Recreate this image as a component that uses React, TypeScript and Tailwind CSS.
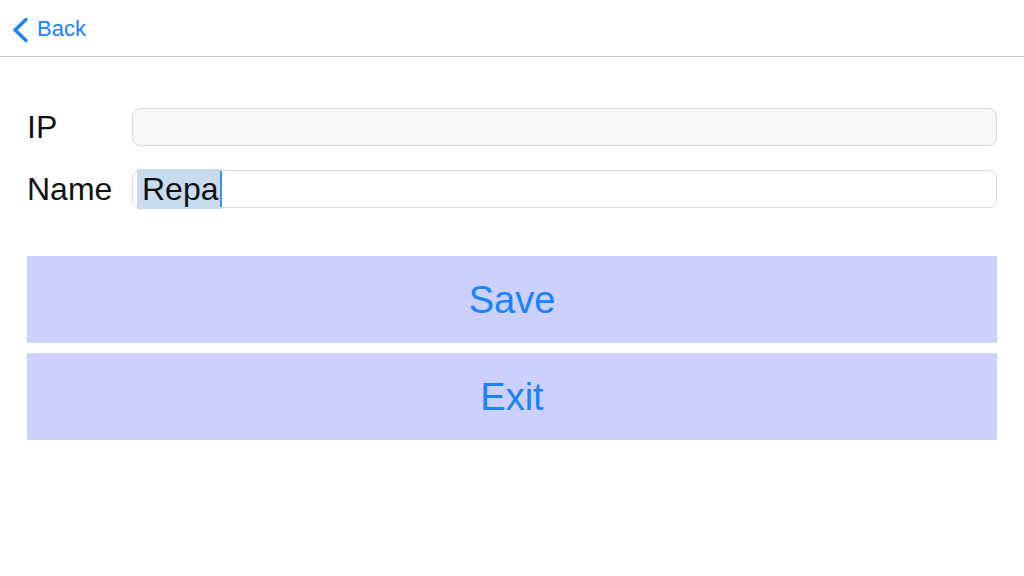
import React from "react";

export default function App() {
  const font = { fontFamily: '"Liberation Sans", Arial, sans-serif' };
  return (
    <div className="w-[1024px] h-[576px] bg-white overflow-hidden" style={font}>
      <div className="h-[57px] border-b border-[#c8c8c8] flex items-center pl-[11px] pt-[2px]">
        <svg width="18" height="26" viewBox="0 0 18 26" className="mt-[1px]">
          <path d="M15 2.5 L4 13 L15 23.5" fill="none" stroke="#1a82fb" strokeWidth="3.4" strokeLinecap="round" strokeLinejoin="round" />
        </svg>
        <span className="ml-[8px] text-[22px] text-[#1a82fb] leading-none">Back</span>
      </div>
      <div className="pt-[51px] px-[27px]">
        <div className="flex flex-col gap-[24px]">
          <div className="flex items-center h-[38px]">
            <div className="w-[105px] text-[32px] text-[#111] leading-none">IP</div>
            <div className="flex-1 h-[38px] rounded-[8px] border border-[#d9d9d9] bg-[#f7f7f7]" />
          </div>
          <div className="flex items-center h-[38px]">
            <div className="w-[105px] text-[32px] text-[#111] leading-none">Name</div>
            <div className="flex-1 h-[38px] rounded-[8px] border border-[#d9d9d9] bg-white flex items-center pl-[4px]">
              <span className="relative h-[40px] flex items-center pl-[5px] pr-[3px] bg-[#c8dcf0] text-[32px] text-[#111] leading-none">
                Repa
                <span className="absolute right-0 top-[2px] bottom-[2px] w-[2px] bg-[#3b8ef5]" />
              </span>
            </div>
          </div>
        </div>
        <div className="mt-[48px] flex flex-col gap-[10px]">
          <button className="h-[87px] w-full bg-[#ccd0ff] text-[#1a82fb] text-[38px] leading-none">Save</button>
          <button className="h-[87px] w-full bg-[#ccd0ff] text-[#1a82fb] text-[38px] leading-none">Exit</button>
        </div>
      </div>
    </div>
  );
}
